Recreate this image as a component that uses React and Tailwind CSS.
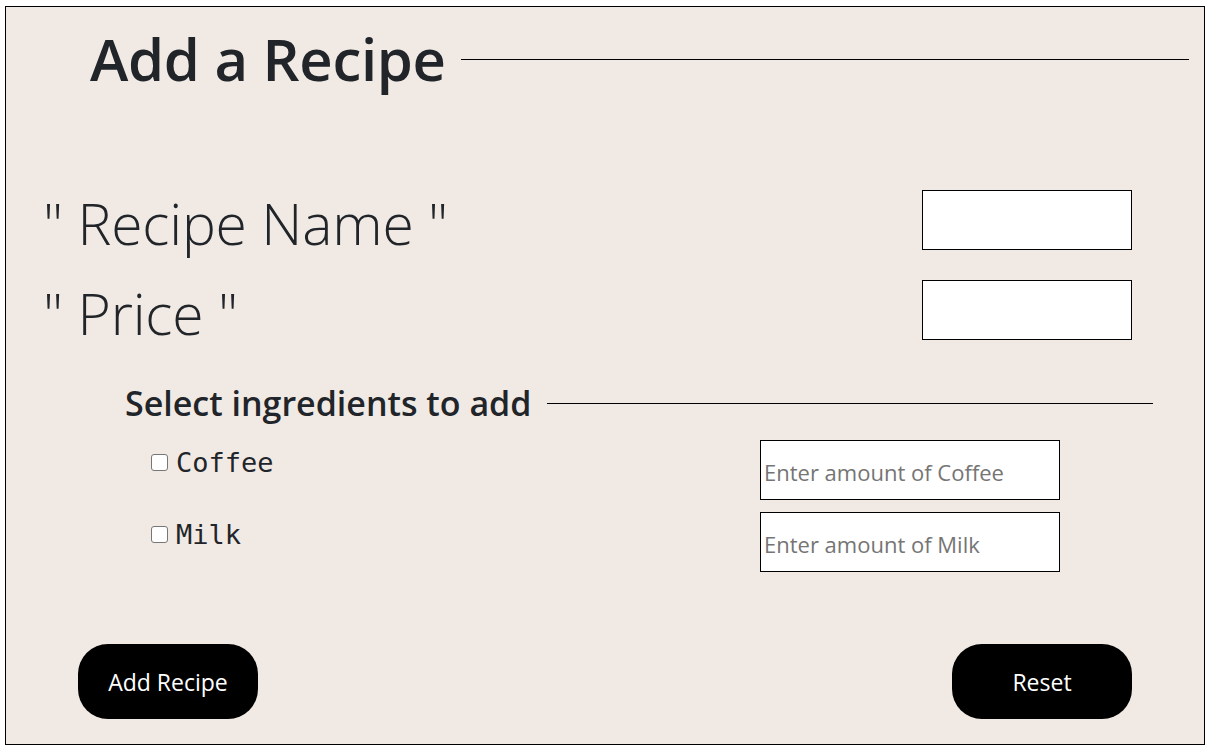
import { useState } from "react";

const ingredientes = ["Coffee", "Milk"];

export default function App() {
  const [form, setForm] = useState({ name: "", price: "" });
  const [checked, setChecked] = useState({});
  const [amounts, setAmounts] = useState({});

  const reset = () => {
    setForm({ name: "", price: "" });
    setChecked({});
    setAmounts({});
  };

  return (
    <div className="px-[5px] pt-[6px] font-['Open_Sans',sans-serif] text-[#212529]">
      <div className="h-[739px] border border-black bg-[#f1eae4] flex flex-col">
        {/* titulo */}
        <div className="flex items-center h-[104px] pl-[84px] pr-[15px]">
          <h1 className="text-[58px] leading-none font-semibold tracking-[-0.3px]">Add a Recipe</h1>
          <div className="flex-1 h-px bg-black ml-[15px]" />
        </div>

        <div className="mt-[79px] flex items-center justify-between h-[60px] pl-[37px] pr-[72px]">
          <label className="text-[57px] leading-none font-light tracking-[-0.2px] pt-[6px]">" Recipe Name "</label>
          <input
            value={form.name}
            onChange={(e) => setForm((f) => ({ ...f, name: e.target.value }))}
            className="w-[210px] h-[60px] border border-black bg-white px-1 outline-none"
          />
        </div>

        <div className="mt-[30px] flex items-center justify-between h-[60px] pl-[37px] pr-[72px]">
          <label className="text-[57px] leading-none font-light tracking-[-0.2px] pt-[6px]">" Price "</label>
          <input
            value={form.price}
            onChange={(e) => setForm((f) => ({ ...f, price: e.target.value }))}
            className="w-[210px] h-[60px] border border-black bg-white px-1 outline-none"
          />
        </div>

        {/* ingredientes */}
        <div className="mt-[43px] flex items-center h-[40px] pl-[119px] pr-[51px]">
          <h2 className="text-[34px] leading-none font-semibold">Select ingredients to add</h2>
          <div className="flex-1 h-px bg-black ml-[16px]" />
        </div>

        <div className="mt-[17px] flex flex-col gap-[12px]">
          {ingredientes.map((ing) => (
            <div key={ing} className="flex h-[60px] pl-[145px]">
              <label className="w-[609px] flex items-center gap-[8px] h-[44px]">
                <input
                  type="checkbox"
                  checked={!!checked[ing]}
                  onChange={(e) => setChecked((c) => ({ ...c, [ing]: e.target.checked }))}
                  className="appearance-none w-[17px] h-[17px] m-0 rounded-[3px] border border-[#767676] bg-white checked:bg-[#0075ff] checked:border-[#0075ff]"
                />
                <span className="font-['DejaVu_Sans_Mono',monospace] text-[27px] leading-none">{ing}</span>
              </label>
              <input
                placeholder={`Enter amount of ${ing}`}
                value={amounts[ing] ?? ""}
                onChange={(e) => setAmounts((a) => ({ ...a, [ing]: e.target.value }))}
                className="w-[300px] h-[60px] border border-black bg-white px-[3px] pt-[4px] text-[22px] placeholder:text-[#757575] outline-none"
              />
            </div>
          ))}
        </div>

        <div className="mt-[72px] flex justify-between pl-[72px] pr-[72px]">
          <button className="w-[180px] h-[75px] rounded-[30px] bg-black text-white text-[23px] pt-[2px]">
            Add Recipe
          </button>
          <button onClick={reset} className="w-[180px] h-[75px] rounded-[30px] bg-black text-white text-[23px] pt-[2px]">
            Reset
          </button>
        </div>
      </div>
    </div>
  );
}
